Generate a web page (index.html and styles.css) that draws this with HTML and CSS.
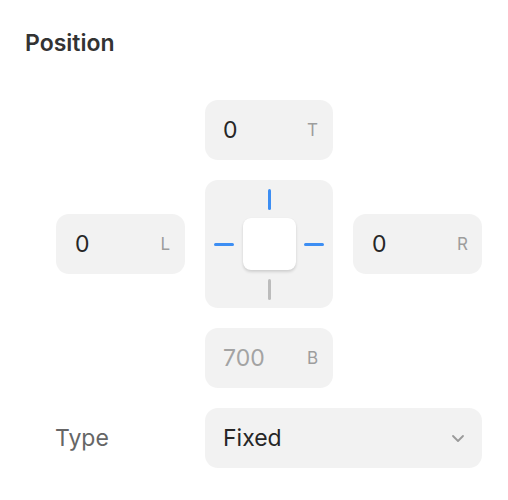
FILE: index.html
```html
<!DOCTYPE html>
<html>
<head>
<meta charset="utf-8">
<link rel="stylesheet" href="styles.css">
</head>
<body>
<div class="panel">
  <h2 class="title">Position</h2>
  <div class="grid">
    <div class="field f-top"><span class="val">0</span><span class="suf">T</span></div>
    <div class="field f-left"><span class="val">0</span><span class="suf">L</span></div>
    <div class="pad">
      <span class="ln v on c2 r1"></span>
      <span class="ln h on c1 r2"></span>
      <span class="box c2 r2"></span>
      <span class="ln h on c3 r2"></span>
      <span class="ln v off c2 r3"></span>
    </div>
    <div class="field f-right"><span class="val">0</span><span class="suf">R</span></div>
    <div class="field f-bottom"><span class="val muted">700</span><span class="suf">B</span></div>
    <div class="label">Type</div>
    <div class="select">
      <span class="val">Fixed</span>
      <svg class="chev" width="14" height="9" viewBox="0 0 14 9"><path d="M2 2l5 5 5-5" fill="none" stroke="#9a9a9a" stroke-width="1.8" stroke-linecap="round" stroke-linejoin="round"/></svg>
    </div>
  </div>
</div>
</body>
</html>
```
FILE: styles.css
```css
* { box-sizing: border-box; }
body {
  margin: 0;
  background: #fff;
  font-family: Inter, "Noto Sans", "Liberation Sans", sans-serif;
  color: #2b2b2b;
}
.panel {
  padding: 29px 0 0 25px;
}
.title {
  margin: 0;
  font-size: 23px;
  line-height: 28px;
  font-weight: 600;
  color: #333;
}
.grid {
  margin-top: 43px;
  margin-left: 31px;
  display: grid;
  grid-template-columns: 129px 128px 129px;
  grid-template-rows: 60px 128px 60px 60px;
  column-gap: 20px;
  row-gap: 20px;
}
.field, .select {
  background: #f2f2f2;
  border-radius: 13px;
  display: flex;
  align-items: center;
  justify-content: space-between;
  padding: 0 15px 0 18px;
}
.f-top { grid-column: 2; grid-row: 1; }
.f-left { grid-column: 1; grid-row: 2; align-self: center; height: 60px; padding-left: 19px; padding-right: 15px; }
.pad { grid-column: 2; grid-row: 2; }
.f-right { grid-column: 3; grid-row: 2; align-self: center; height: 60px; padding-left: 19px; padding-right: 14px; }
.f-bottom { grid-column: 2; grid-row: 3; }
.label { grid-column: 1; grid-row: 4; align-self: center; font-size: 23px; color: #666; margin-left: -1px; }
.select { grid-column: 2 / 4; grid-row: 4; padding-right: 17px; }
.val {
  font-size: 23px;
  color: #262626;
}
.val.muted { color: #a3a3a3; }
.suf {
  font-size: 17px;
  color: #9d9d9d;
}
.pad {
  background: #f2f2f2;
  border-radius: 13px;
  display: grid;
  grid-template-columns: 20px 53px 20px;
  grid-template-rows: 21px 52px 21px;
  gap: 8.5px;
  place-content: center;
}
.c1 { grid-column: 1; }
.c2 { grid-column: 2; }
.c3 { grid-column: 3; }
.r1 { grid-row: 1; }
.r2 { grid-row: 2; }
.r3 { grid-row: 3; }
.ln { border-radius: 2px; }
.ln.v { width: 3px; height: 21px; justify-self: center; }
.ln.h { width: 20px; height: 3px; align-self: center; }
.on { background: #3d8ef3; }
.off { background: #bcbcbc; }
.box {
  background: #fff;
  border-radius: 8px;
  box-shadow: 0 2px 3px rgba(0,0,0,0.14), 0 0 1px rgba(0,0,0,0.06);
}
.chev { display: block; }
```
